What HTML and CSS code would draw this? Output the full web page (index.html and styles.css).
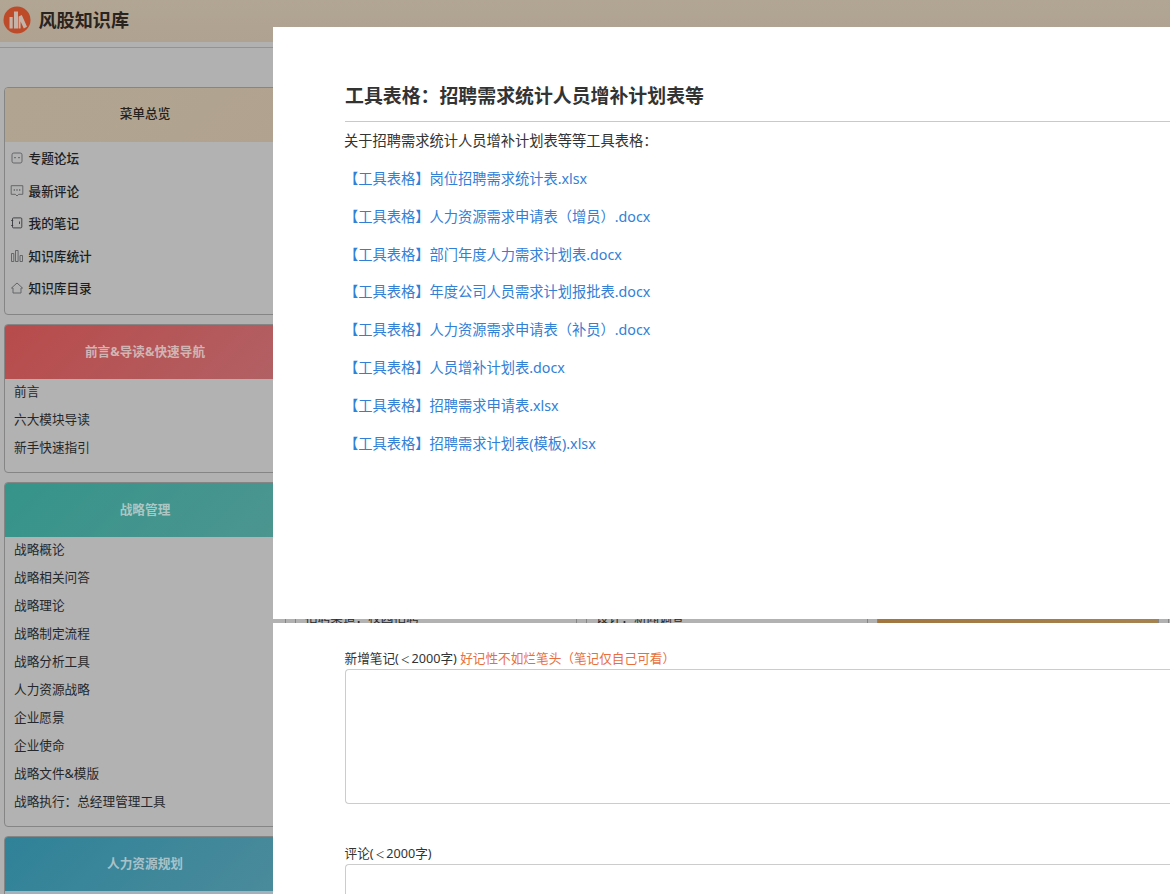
FILE: index.html
```html
<!DOCTYPE html>
<html lang="zh-CN">
<head>
<meta charset="utf-8">
<title>风股知识库</title>
<link rel="stylesheet" href="styles.css">
</head>
<body>
<div class="page">
  <header class="topbar">
    <svg class="logo" viewBox="0 0 28 28"><circle cx="14" cy="14" r="13.5" fill="#bd4a28"/><g fill="#c3b3a9"><rect x="6.500" y="11" width="3.200" height="11.500"/><rect x="11" y="5.500" width="4" height="17"/><path d="M15.600 10.500l3.200-1.500 5.200 11.800-3.200 1.700-3.200-7v7h-2z"/></g></svg>
    <h1 class="brand">风股知识库</h1>
  </header>
  <main class="board">
    <div class="column">
      <section class="card">
        <h2 class="card-head beige">菜单总览</h2>
        <ul class="menu">
          <li><svg class="icon" viewBox="0 0 14 14"><rect x="2" y="2" width="10" height="10" rx="1.800"/><path d="M4 6.700h2M8 6.700h2"/></svg>专题论坛</li>
          <li><svg class="icon" viewBox="0 0 14 14"><path d="M1.200 1.700h11.600v8.600H8.700L7 12 5.300 10.300H1.200z"/><path d="M3.700 6h1.200M6.400 6h1.200M9.100 6h1.200" stroke-width="1.300"/></svg>最新评论</li>
          <li><svg class="icon dark" viewBox="0 0 14 14"><rect x="2.500" y="1.900" width="9.300" height="10" rx="1"/><path d="M1.200 4.500h2M1.200 9.500h2M9.500 5.500v2.500"/></svg>我的笔记</li>
          <li><svg class="icon" viewBox="0 0 14 14"><path d="M1.500 4.500h2.300v8H1.500zM5.500 1.500h2.600v11H5.500zM10 6.500h2.500v6H10z"/></svg>知识库统计</li>
          <li><svg class="icon" viewBox="0 0 14 14"><path d="M1.500 7L7 2l5.500 5H11v5H3V7z"/></svg>知识库目录</li>
        </ul>
      </section>
      <section class="card">
        <h2 class="card-head red">前言&amp;导读&amp;快速导航</h2>
        <ul class="links">
          <li>前言</li>
          <li>六大模块导读</li>
          <li>新手快速指引</li>
        </ul>
      </section>
      <section class="card">
        <h2 class="card-head teal">战略管理</h2>
        <ul class="links">
          <li>战略概论</li>
          <li>战略相关问答</li>
          <li>战略理论</li>
          <li>战略制定流程</li>
          <li>战略分析工具</li>
          <li>人力资源战略</li>
          <li>企业愿景</li>
          <li>企业使命</li>
          <li>战略文件&amp;模版</li>
          <li>战略执行：总经理管理工具</li>
        </ul>
      </section>
      <section class="card">
        <h2 class="card-head blue">人力资源规划</h2>
        <ul class="links tinted"><li></li></ul>
      </section>
    </div>
    <div class="column lower">
      <section class="card"><ul class="links"><li>招聘渠道：校园招聘</li></ul></section>
    </div>
    <div class="column lower">
      <section class="card"><ul class="links"><li>设计：新闻调查</li></ul></section>
    </div>
    <div class="column lower">
      <section class="card"><h2 class="card-head gold"></h2></section>
    </div>
    <div class="column lower">
      <section class="card"><ul class="links"><li></li></ul></section>
    </div>
  </main>
</div>

<div class="drawer">
  <article class="panel document">
    <h2 class="doc-title">工具表格：招聘需求统计人员增补计划表等</h2>
    <p>关于招聘需求统计人员增补计划表等等工具表格：</p>
    <p><a>【工具表格】岗位招聘需求统计表.xlsx</a></p>
    <p><a>【工具表格】人力资源需求申请表（增员）.docx</a></p>
    <p><a>【工具表格】部门年度人力需求计划表.docx</a></p>
    <p><a>【工具表格】年度公司人员需求计划报批表.docx</a></p>
    <p><a>【工具表格】人力资源需求申请表（补员）.docx</a></p>
    <p><a>【工具表格】人员增补计划表.docx</a></p>
    <p><a>【工具表格】招聘需求申请表.xlsx</a></p>
    <p><a>【工具表格】招聘需求计划表(模板).xlsx</a></p>
  </article>
  <section class="panel forms">
    <label class="field-label">新增笔记(<span class="less">＜</span>2000字) <span class="hint">好记性不如烂笔头（笔记仅自己可看）</span></label>
    <div class="field"></div>
    <label class="field-label second">评论(<span class="less">＜</span>2000字)</label>
    <div class="field"></div>
  </section>
</div>
</body>
</html>
```
FILE: styles.css
```css
* { box-sizing: border-box; }
html, body { height: 100%; }
body {
  margin: 0;
  overflow: hidden;
  background: #b1b1b2;
  color: #26272a;
  font: 12.65px/28px "Noto Sans", "Noto Sans CJK SC", sans-serif;
}
h1, h2, p, ul { margin: 0; padding: 0; }
ul { list-style: none; }

.page { height: 894px; overflow: hidden; }
.topbar {
  display: flex;
  align-items: flex-start;
  gap: 8px;
  height: 48px;
  padding: 6px 0 0 2.5px;
  background: linear-gradient(#b1a593, #b0a290) 0 0 / 100% 42px no-repeat;
  border-bottom: 1px solid #929297;
}
.logo { width: 28px; height: 28px; flex: none; }
.brand { color: #29241f; font-size: 18.1px; line-height: 28px; font-weight: 700; }

.board { display: flex; gap: 9px; padding: 39px 0 0 4px; }
.column { display: flex; flex-direction: column; flex: none; gap: 9px; width: 282px; }
.lower { padding-top: 517px; }
.card {
  border: 1px solid #858585;
  border-radius: 4px;
  background: #b2b2b2;
  overflow: hidden;
}
.card-head {
  height: 54px;
  line-height: 52px;
  color: #c5c3c2;
  font-size: 12.65px;
  font-weight: 700;
  text-align: center;
}
.beige { color: #242220; line-height: 51px; font-weight: 500; background: linear-gradient(135deg, #b1a592, #b0a28f); }
.red { background: linear-gradient(135deg, #b84b4b, #b26165); color: #d0b5b4; }
.teal { background: linear-gradient(135deg, #35948a, #4d9590); color: #aec6c3; }
.blue { background: linear-gradient(135deg, #2f8298, #4b8b9b); color: #a9c2c9; }
.gold { background: linear-gradient(135deg, #a1763f, #a58452); }

.menu { padding-bottom: 9px; }
.menu li {
  display: flex;
  align-items: center;
  gap: 4.5px;
  height: 32.5px;
  padding-left: 5px;
  color: #1d1f22;
  font-weight: 500;
  line-height: 26px;
}
.icon { width: 14px; height: 14px; fill: none; stroke: #5c5d60; stroke-width: 0.9; }
.dark { stroke: #38393c; }
.links { padding: 0 9px 9px; }
.links li { height: 28px; line-height: 25px; white-space: nowrap; }
.tinted { background: #a3b1bc; }

.drawer {
  position: absolute;
  top: 27px;
  left: 273px;
  right: 0;
  bottom: 0;
  display: flex;
  flex-direction: column;
  gap: 4px;
  overflow: hidden;
}
.panel { padding-left: 72px; background: #fff; }
.document { height: 592px; flex: none; padding-top: 48px; color: #333; }
.doc-title {
  height: 47px;
  margin-bottom: 8px;
  border-bottom: 1px solid #c9c9c9;
  font-size: 18.9px;
  line-height: 43px;
  font-weight: 700;
}
.document p { height: 37.85px; margin-left: -1px; font-size: 14.25px; line-height: 22px; }
.document a { color: #3280d6; }
.forms { flex: 1; padding-top: 22px; }
.field-label { display: block; height: 24px; margin-left: -0.5px; line-height: 27px; color: #333; }
.less { display: inline-block; width: 12.65px; font-size: 9.5px; line-height: 1; text-align: center; }
.second { margin-top: 36px; }
.hint { color: #e86f3c; }
.field {
  height: 135px;
  border: 1px solid #ccc;
  border-right: 0;
  border-radius: 4px 0 0 4px;
}
```
